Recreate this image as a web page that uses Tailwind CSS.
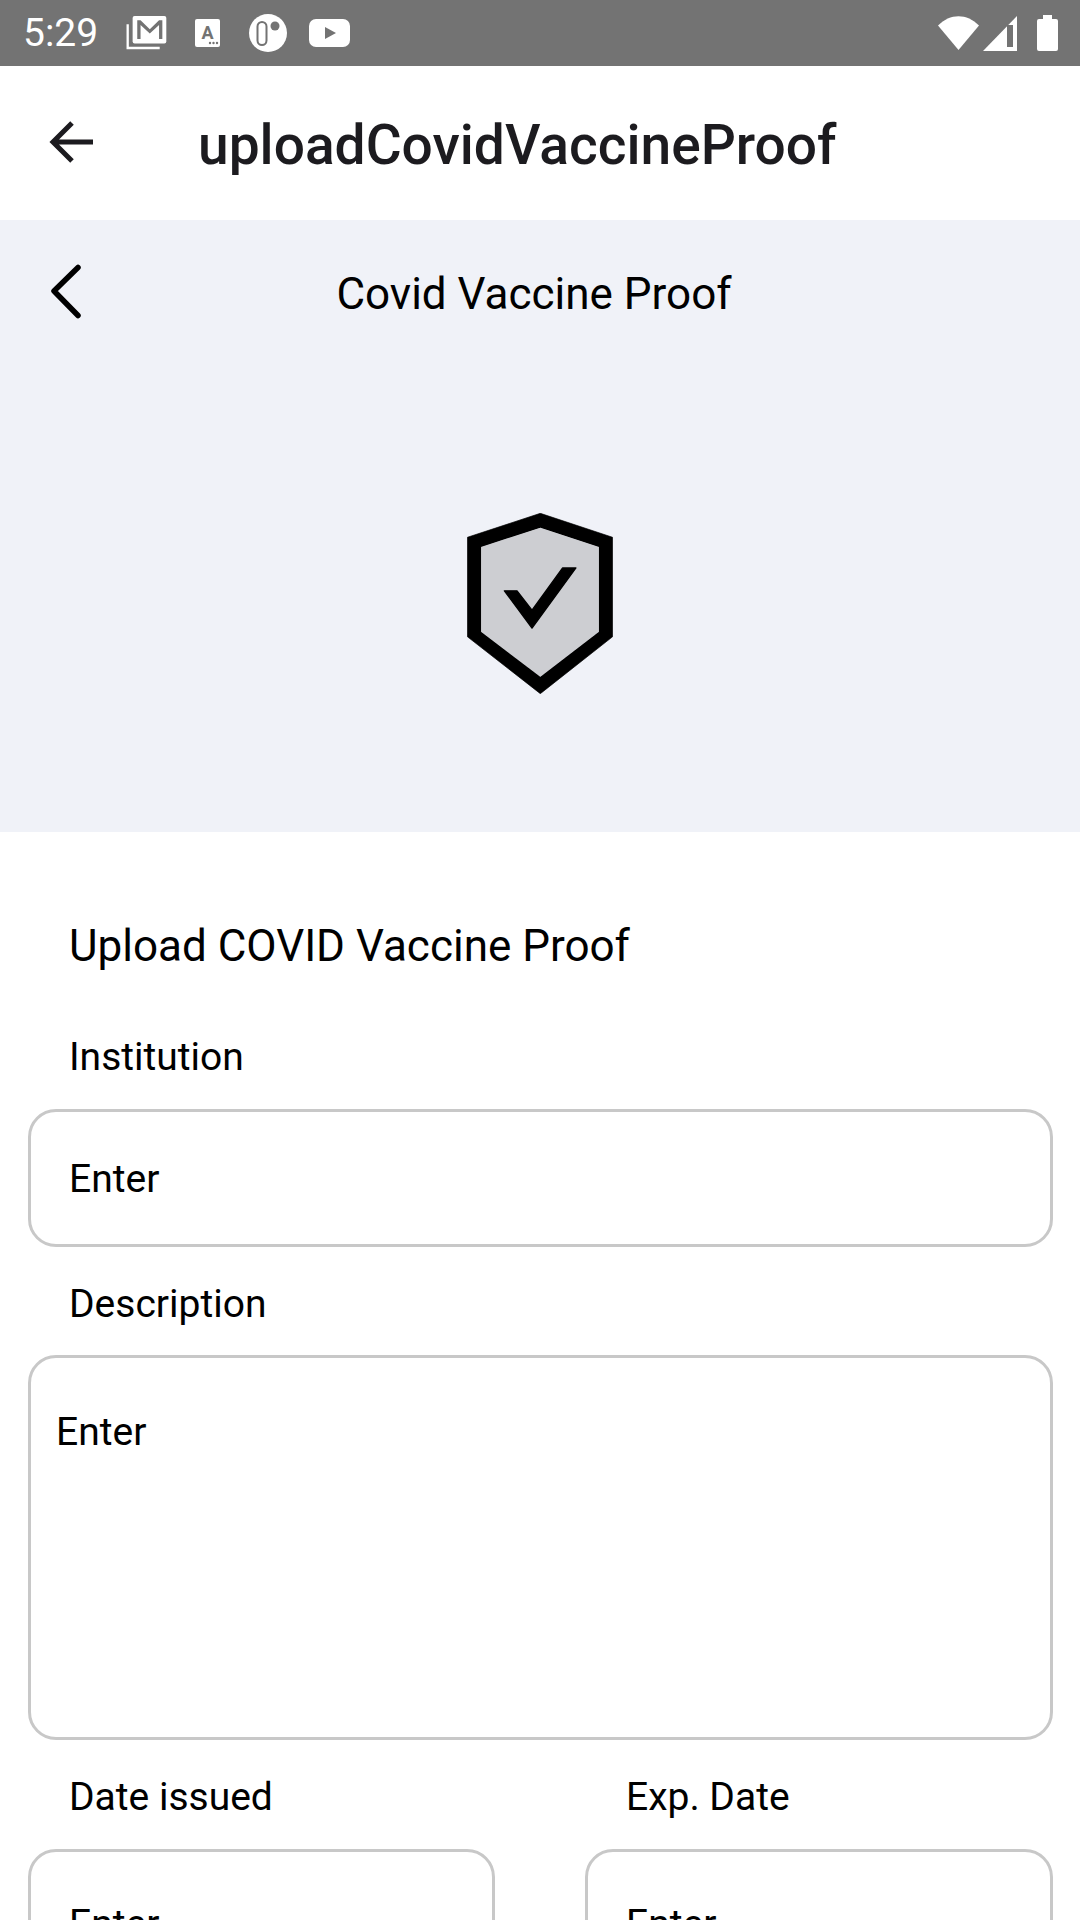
<!DOCTYPE html>
<html lang="en">
<head>
    <meta charset="UTF-8">
    <title>uploadCovidVaccineProof</title>
    <script src="https://cdn.jsdelivr.net/npm/@tailwindcss/browser@4"></script>
</head>
<body class="bg-white font-['Roboto',sans-serif] text-black h-[1920px] w-[1080px] overflow-hidden">

    <!-- status bar -->
    <div class="h-[66px] bg-[#737373] flex items-center justify-between text-white pl-[23px] pr-[22px]">
        <div class="flex items-center">
            <span class="text-[39px] leading-[66px] w-[103px]">5:29</span>
            <svg class="w-[41px] h-[35px] mt-[-1px]" viewBox="18 22 124 106">
                <rect x="38" y="25" width="102" height="83" rx="6" fill="#fff"/>
                <path d="M52 38h10l28 27 28-27h10v57h-10V52L90 78 62 52v43H52z" fill="#737373"/>
                <path d="M23 50v72h97" fill="none" stroke="#fff" stroke-width="7"/>
            </svg>
            <svg class="w-[25px] h-[28px] ml-[28px]" viewBox="0 0 25 28">
                <rect width="25" height="28" rx="2" fill="#fff"/>
                <text x="12.500" y="20" text-anchor="middle" font-family="Roboto" font-weight="700" font-size="18" fill="#737373">A</text>
                <circle cx="15" cy="24" r="1.200" fill="#737373"/><circle cx="18.500" cy="24" r="1.200" fill="#737373"/><circle cx="22" cy="24" r="1.200" fill="#737373"/>
            </svg>
            <svg class="w-[38px] h-[38px] ml-[29px]" viewBox="0 0 38 38">
                <circle cx="19" cy="19" r="19" fill="#fff"/>
                <rect x="8.500" y="8" width="9" height="23" rx="4.500" fill="#fff" stroke="#737373" stroke-width="2"/>
                <circle cx="26" cy="12" r="4.500" fill="#737373"/>
            </svg>
            <svg class="w-[41px] h-[28px] ml-[22px]" viewBox="0 0 41 28">
                <rect width="41" height="28" rx="7" fill="#fff"/>
                <path d="M16 8v12l11-6z" fill="#737373"/>
            </svg>
        </div>
        <div class="flex items-center">
            <svg class="w-[41px] h-[34px]" viewBox="0 0 41 34"><path d="M0 9.500C12-3 29-3 41 9.500L20.500 34z" fill="#fff"/></svg>
            <svg class="w-[34px] h-[35px] ml-[4px]" viewBox="0 0 34 35">
                <path d="M34 0v35H0z" fill="#fff"/>
                <path d="M24 9h6v22h-6z" fill="#737373"/>
            </svg>
            <svg class="w-[21px] h-[36px] ml-[20px]" viewBox="0 0 21 36">
                <path d="M6 0h9v4h4a2 2 0 0 1 2 2v28a2 2 0 0 1-2 2H2a2 2 0 0 1-2-2V6a2 2 0 0 1 2-2h4z" fill="#fff"/>
            </svg>
        </div>
    </div>

    <!-- app bar -->
    <div class="h-[154px] flex items-center pl-[49px]">
        <svg class="w-[45px] h-[42px] mt-[-2px] text-[#1c1b1f]" viewBox="0 0 45 42" fill="none" stroke="currentColor" stroke-width="5">
            <path d="M44 21H4M23 2 4 21l19 19"/>
        </svg>
        <h1 class="ml-[104px] pt-[5px] text-[55.1px] font-medium text-[#1c1b1f] leading-none">uploadCovidVaccineProof</h1>
    </div>

    <!-- header panel -->
    <div class="h-[612px] bg-[#f0f2f8] flex flex-col items-center">
        <div class="w-full h-[142px] flex items-center justify-center relative">
            <svg class="absolute left-[50px] top-[44px] w-[34px] h-[56px]" viewBox="0 0 34 56" fill="none" stroke="#000" stroke-width="5.500" stroke-linecap="round" stroke-linejoin="round">
                <path d="M28 3.500 4 27l24 24.500"/>
            </svg>
            <span class="text-[44px] pt-[5px] ml-[-12px] leading-none">Covid Vaccine Proof</span>
        </div>
        <svg class="w-[146px] h-[181px] mt-[151px]" viewBox="80 68 438 544">
            <path fill-rule="evenodd" stroke="#000" stroke-width="2" stroke-linejoin="round" d="M300 69 517 141V440L300 611 81 440V141zM300 112 122 170V425L300 560 476 425V170z"/>
            <path fill="#cdced2" d="M300 112 122 170V425L300 560 476 425V170z"/>
            <path stroke="#000" stroke-width="4" stroke-linejoin="round" d="M192 302h38l45 58 92-127h40L275 414z"/>
        </svg>
    </div>

    <!-- form -->
    <div class="pl-[28px] pr-[27px]">
        <h2 class="pl-[41px] mt-[89px] text-[44px] leading-[50px]">Upload COVID Vaccine Proof</h2>

        <label class="block pl-[41px] mt-[64px] text-[39px] leading-[44px]">Institution</label>
        <div class="mt-[30px] h-[138px] border-[3px] border-[#c8c8c8] rounded-[28px] flex items-center pl-[38px] pt-[2px] text-[39px]">Enter</div>

        <label class="block pl-[41px] mt-[35px] text-[39px] leading-[44px]">Description</label>
        <div class="mt-[29px] h-[385px] border-[3px] border-[#c8c8c8] rounded-[28px] pl-[25px] pt-[52px] text-[39px] leading-[44px]">Enter</div>

        <div class="grid grid-cols-[467px_468px] gap-x-[90px] mt-[35px]">
            <div>
                <label class="block pl-[41px] text-[39px] leading-[44px]">Date issued</label>
                <div class="mt-[30px] h-[137px] border-[3px] border-[#c8c8c8] rounded-[28px] pl-[38px] pt-[50px] text-[39px] leading-[44px]">Enter</div>
            </div>
            <div>
                <label class="block pl-[41px] text-[39px] leading-[44px]">Exp. Date</label>
                <div class="mt-[30px] h-[137px] border-[3px] border-[#c8c8c8] rounded-[28px] pl-[38px] pt-[50px] text-[39px] leading-[44px]">Enter</div>
            </div>
        </div>
    </div>

</body>
</html>
